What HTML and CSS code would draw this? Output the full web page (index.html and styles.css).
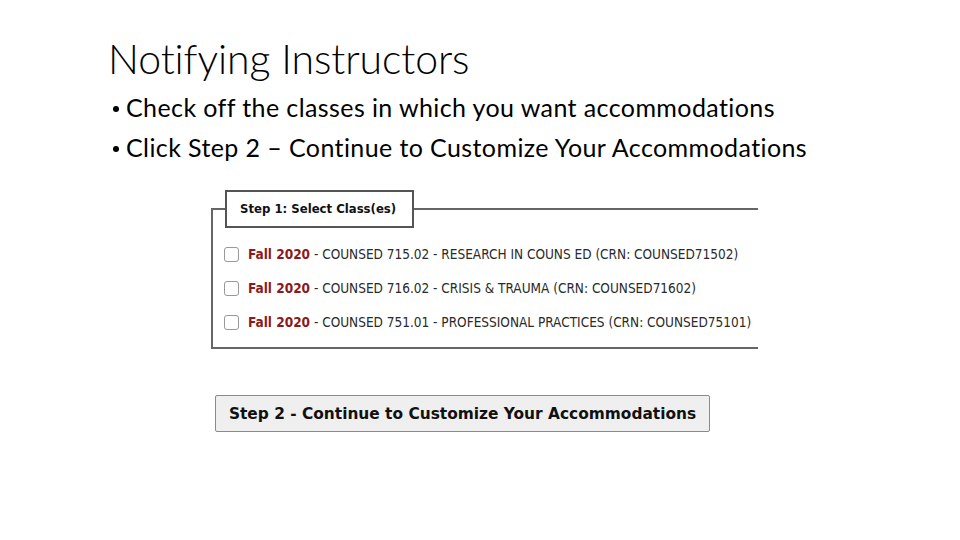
FILE: index.html
```html
<!DOCTYPE html>
<html>
<head>
<meta charset="utf-8">
<link rel="stylesheet" href="styles.css">
</head>
<body>
<div class="slide">
  <h1 class="title">Notifying Instructors</h1>
  <ul class="bullets">
    <li>Check off the classes in which you want accommodations</li>
    <li>Click Step 2 – Continue to Customize Your Accommodations</li>
  </ul>
  <fieldset class="classes">
    <legend class="legend">Step 1: Select Class(es)</legend>
    <label class="row"><span class="box"></span><span class="term">Fall 2020</span> - COUNSED 715.02 - RESEARCH IN COUNS ED (CRN: COUNSED71502)</label>
    <label class="row"><span class="box"></span><span class="term">Fall 2020</span> - COUNSED 716.02 - CRISIS &amp; TRAUMA (CRN: COUNSED71602)</label>
    <label class="row"><span class="box"></span><span class="term">Fall 2020</span> - COUNSED 751.01 - PROFESSIONAL PRACTICES (CRN: COUNSED75101)</label>
  </fieldset>
  <div class="actions">
    <button class="step2">Step 2 - Continue to Customize Your Accommodations</button>
  </div>
</div>
</body>
</html>
```
FILE: styles.css
```css
html, body {
  margin: 0;
  padding: 0;
  background: #ffffff;
}
.slide {
  width: 960px;
  height: 540px;
  overflow: hidden;
  display: flex;
  flex-direction: column;
  font-family: "Lato", "Open Sans", sans-serif;
  color: #000;
}
.title {
  margin: 35px 0 0 108px;
  font-family: "Lato", sans-serif;
  font-weight: 300;
  font-size: 41px;
  line-height: 48px;
  letter-spacing: -0.1px;
}
.bullets {
  list-style: none;
  margin: 4px 0 0 111px;
  padding: 0;
  font-size: 25px;
  line-height: 40px;
  letter-spacing: 0.4px;
}
.bullets li::before {
  content: "";
  display: inline-block;
  width: 6px;
  height: 6px;
  border-radius: 50%;
  background: #000;
  margin: 0 7px 0 2px;
  vertical-align: 0.22em;
}
.classes {
  margin: 23px 0 0 211px;
  width: 547px;
  box-sizing: border-box;
  padding: 9px 0 8px 11px;
  border: 2px solid #666;
  border-right: none;
  font-family: "DejaVu Sans Condensed", "DejaVu Sans", sans-serif;
  font-size: 13.5px;
  color: #2a2a2a;
  display: flex;
  flex-direction: column;
}
.legend {
  margin-left: 1px;
  padding: 0 16px 0 13px;
  height: 34px;
  line-height: 34px;
  border: 2px solid #555;
  font-size: 13px;
  font-weight: bold;
  color: #111;
}
.row {
  display: flex;
  align-items: center;
  height: 34px;
  white-space: pre;
}
.box {
  width: 13px;
  height: 13px;
  border: 1px solid #999;
  border-radius: 3px;
  margin-right: 9px;
  background: #fff;
}
.term {
  color: #8b1a1d;
  font-weight: bold;
}
.actions {
  margin: 46px 0 0 215px;
}
.step2 {
  width: 495px;
  height: 37px;
  background: #efefef;
  border: 1px solid #8a8a8a;
  border-radius: 2px;
  font-family: "DejaVu Sans", sans-serif;
  font-weight: bold;
  font-size: 15.4px;
  color: #111;
  padding: 0;
}
```
